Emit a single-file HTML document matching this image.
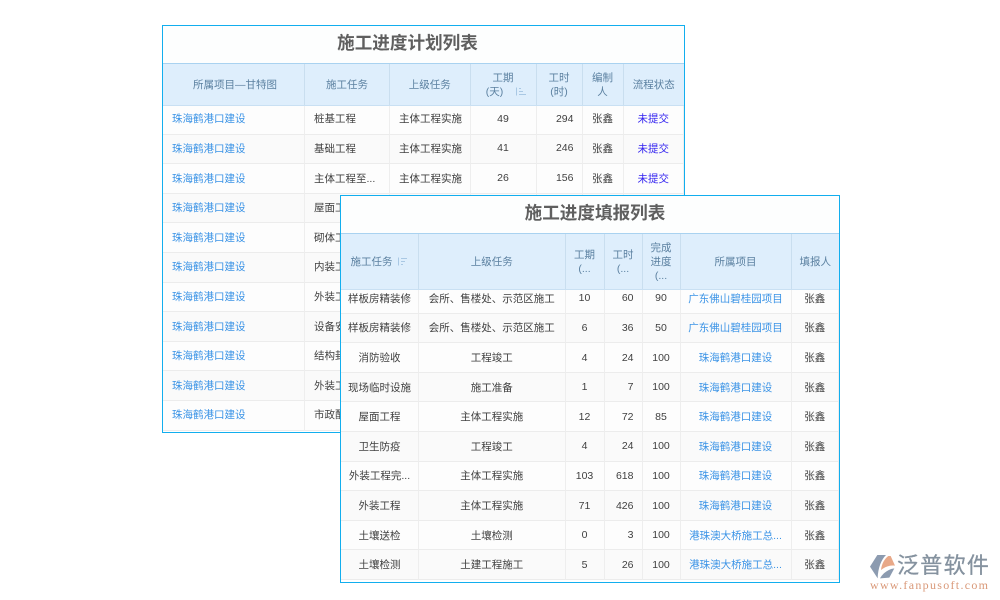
<!DOCTYPE html>
<html lang="zh">
<head>
<meta charset="utf-8">
<style>
html,body{margin:0;padding:0;background:#fff;}
body{width:1000px;height:600px;position:relative;overflow:hidden;font-family:"Liberation Sans","Noto Sans CJK SC",sans-serif;font-size:10.5px;color:#404040;}
.panel{position:absolute;box-sizing:border-box;border:1px solid #12aeee;background:#fff;overflow:hidden;}
.title{position:absolute;left:0;right:0;top:0;height:37px;line-height:35px;text-align:center;font-size:17.6px;font-weight:bold;color:#5f5f5f;background:#fdfefe;border-bottom:1px solid #a9d2f0;box-sizing:content-box;z-index:3;}
.head{position:absolute;left:0;right:0;display:grid;background:#deeefc;border-bottom:1px solid #c9e0f3;box-sizing:border-box;color:#5b80a0;z-index:2;}
.head div{display:flex;align-items:center;justify-content:center;text-align:center;border-right:1px solid #c9deef;box-sizing:border-box;line-height:14px;}
.head div:last-child{border-right:0;}
.body{position:absolute;left:0;right:0;display:grid;grid-auto-rows:29.62px;z-index:1;}
.body div{display:flex;align-items:center;justify-content:center;box-sizing:border-box;border-right:1px solid #eeeeee;border-bottom:1px solid #ececec;background:#fdfdfd;white-space:nowrap;overflow:hidden;}
.body div:nth-child(14n+8),.body div:nth-child(14n+9),.body div:nth-child(14n+10),.body div:nth-child(14n+11),.body div:nth-child(14n+12),.body div:nth-child(14n+13),.body div:nth-child(14n+14){background:#fafafa;}
.t1 .body div{padding-bottom:1px;}
.t1 .head div{padding-top:1px;}
.body .l{justify-content:flex-start;padding-left:9px;}
.body .r{justify-content:flex-end;padding-right:8px;}
.body .a{color:#3a93e6;}
.body .s{color:#2f1ff0;}
.sort{display:inline-block;vertical-align:-1px;}
#logo{position:absolute;left:860px;top:545px;width:140px;height:55px;}
</style>
</head>
<body>

<div class="panel t1" style="left:162px;top:25px;width:523px;height:408px;">
  <div class="title" style="padding-right:32px;">施工进度计划列表</div>
  <div class="head" style="top:38px;height:42px;grid-template-columns:142px 85px 80.5px 66px 46px 41px 60.5px;">
    <div style="padding-left:3px;">所属项目—甘特图</div>
    <div>施工任务</div>
    <div>上级任务</div>
    <div><span>工期<br><span style="position:relative;left:3.5px;"><span style="margin-right:2px;">(天)</span> <svg class="sort" width="12" height="9" viewBox="0 0 12 9" style="margin-left:7px;"><path d="M1.5 0.5V8.5M4 1.5H6M4 4.5H8M4 7.5H11" stroke="#a9c8e4" stroke-width="1" fill="none"/></svg></span></span></div>
    <div>工时<br>(时)</div>
    <div>编制<br>人</div>
    <div>流程状态</div>
  </div>
  <div class="body" style="top:79px;grid-template-columns:142px 85px 80.5px 66px 46px 41px 60.5px;">
    <div class="l a">珠海鹤港口建设</div><div class="l">桩基工程</div><div class="l">主体工程实施</div><div>49</div><div class="r">294</div><div>张鑫</div><div class="s">未提交</div>
    <div class="l a">珠海鹤港口建设</div><div class="l">基础工程</div><div class="l">主体工程实施</div><div>41</div><div class="r">246</div><div>张鑫</div><div class="s">未提交</div>
    <div class="l a">珠海鹤港口建设</div><div class="l">主体工程至...</div><div class="l">主体工程实施</div><div>26</div><div class="r">156</div><div>张鑫</div><div class="s">未提交</div>
    <div class="l a">珠海鹤港口建设</div><div class="l">屋面工程</div><div class="l">主体工程实施</div><div>12</div><div class="r">72</div><div>张鑫</div><div class="s">未提交</div>
    <div class="l a">珠海鹤港口建设</div><div class="l">砌体工程</div><div class="l">主体工程实施</div><div>20</div><div class="r">120</div><div>张鑫</div><div class="s">未提交</div>
    <div class="l a">珠海鹤港口建设</div><div class="l">内装工程</div><div class="l">主体工程实施</div><div>30</div><div class="r">180</div><div>张鑫</div><div class="s">未提交</div>
    <div class="l a">珠海鹤港口建设</div><div class="l">外装工程</div><div class="l">主体工程实施</div><div>71</div><div class="r">426</div><div>张鑫</div><div class="s">未提交</div>
    <div class="l a">珠海鹤港口建设</div><div class="l">设备安装</div><div class="l">主体工程实施</div><div>15</div><div class="r">90</div><div>张鑫</div><div class="s">未提交</div>
    <div class="l a">珠海鹤港口建设</div><div class="l">结构封顶</div><div class="l">主体工程实施</div><div>10</div><div class="r">60</div><div>张鑫</div><div class="s">未提交</div>
    <div class="l a">珠海鹤港口建设</div><div class="l">外装工程</div><div class="l">主体工程实施</div><div>71</div><div class="r">426</div><div>张鑫</div><div class="s">未提交</div>
    <div class="l a">珠海鹤港口建设</div><div class="l">市政配套</div><div class="l">主体工程实施</div><div>8</div><div class="r">48</div><div>张鑫</div><div class="s">未提交</div>
  </div>
</div>

<div class="panel" style="left:340px;top:195px;width:500px;height:388px;z-index:5;">
  <div class="title" style="padding-left:10px;">施工进度填报列表</div>
  <div class="head" style="top:38px;height:56px;grid-template-columns:78px 146.5px 39px 38px 38px 111px 47.5px;">
    <div><span>施工任务 <svg class="sort" width="11" height="9" viewBox="0 0 11 9" style="margin-left:2px;"><path d="M1.5 0.5V8.5M4 1.5H10M4 4.5H8M4 7.5H6" stroke="#a9c8e4" stroke-width="1" fill="none"/></svg></span></div>
    <div>上级任务</div>
    <div>工期<br>(...</div>
    <div>工时<br>(...</div>
    <div>完成<br>进度<br>(...</div>
    <div>所属项目</div>
    <div>填报人</div>
  </div>
  <div class="body" style="top:88px;grid-template-columns:78px 146.5px 39px 38px 38px 111px 47.5px;">
    <div>样板房精装修</div><div>会所、售楼处、示范区施工</div><div>10</div><div class="r">60</div><div>90</div><div class="a">广东佛山碧桂园项目</div><div>张鑫</div>
    <div>样板房精装修</div><div>会所、售楼处、示范区施工</div><div>6</div><div class="r">36</div><div>50</div><div class="a">广东佛山碧桂园项目</div><div>张鑫</div>
    <div>消防验收</div><div>工程竣工</div><div>4</div><div class="r">24</div><div>100</div><div class="a">珠海鹤港口建设</div><div>张鑫</div>
    <div>现场临时设施</div><div>施工准备</div><div>1</div><div class="r">7</div><div>100</div><div class="a">珠海鹤港口建设</div><div>张鑫</div>
    <div>屋面工程</div><div>主体工程实施</div><div>12</div><div class="r">72</div><div>85</div><div class="a">珠海鹤港口建设</div><div>张鑫</div>
    <div>卫生防疫</div><div>工程竣工</div><div>4</div><div class="r">24</div><div>100</div><div class="a">珠海鹤港口建设</div><div>张鑫</div>
    <div>外装工程完...</div><div>主体工程实施</div><div>103</div><div class="r">618</div><div>100</div><div class="a">珠海鹤港口建设</div><div>张鑫</div>
    <div>外装工程</div><div>主体工程实施</div><div>71</div><div class="r">426</div><div>100</div><div class="a">珠海鹤港口建设</div><div>张鑫</div>
    <div>土壤送检</div><div>土壤检测</div><div>0</div><div class="r">3</div><div>100</div><div class="a">港珠澳大桥施工总...</div><div>张鑫</div>
    <div>土壤检测</div><div>土建工程施工</div><div>5</div><div class="r">26</div><div>100</div><div class="a">港珠澳大桥施工总...</div><div>张鑫</div>
  </div>
</div>

<div id="logo">
  <svg width="140" height="55" viewBox="0 0 420 165" style="position:absolute;left:0;top:0;">
    <path d="M30 65L52 30H78C64 44 54 68 53 100Z" fill="#8c9bb0"/>
    <path d="M63 75C65 55 75 40 85 33H92L105 62C88 60 75 65 63 75Z" fill="#e8a888"/>
    <path d="M60 100C68 85 85 72 103 70L88 98Z" fill="#8c9bb0"/>
  </svg>
  <div style="position:absolute;left:37px;top:7px;font-size:22px;line-height:28px;letter-spacing:1.3px;color:#85929f;font-family:'Liberation Sans','Noto Sans CJK SC',sans-serif;white-space:nowrap;-webkit-text-stroke:0.3px #85929f;">泛普软件</div>
  <div style="position:absolute;left:10px;top:33px;font-size:12px;line-height:14px;letter-spacing:1.3px;color:#d99878;font-family:'Liberation Serif','Noto Serif CJK SC',serif;white-space:nowrap;">www.fanpusoft.com</div>
</div>

</body>
</html>
